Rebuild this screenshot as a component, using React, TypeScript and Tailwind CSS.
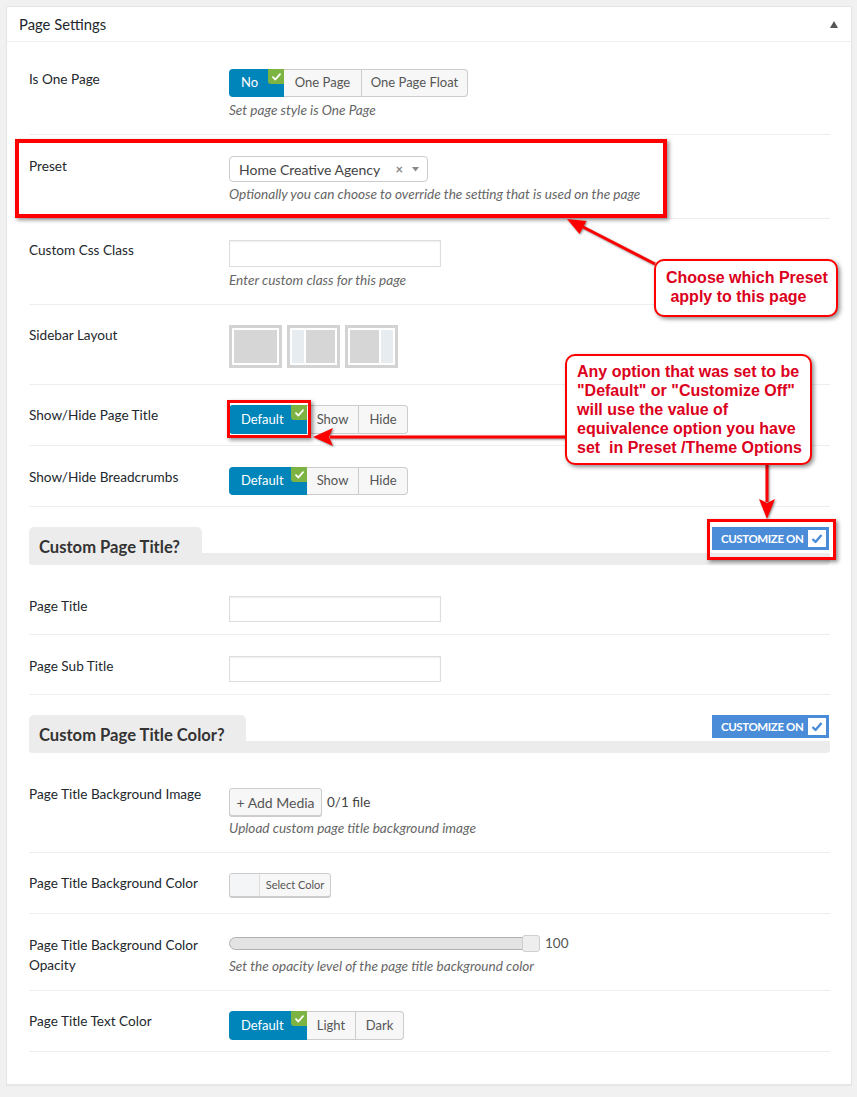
import React from "react";

function Badge() {
  return (
    <div className="absolute top-0 right-0 w-[16px] h-[15px] bg-[#7cb342] rounded-bl-[3px] flex items-center justify-center">
      <svg width="9" height="8" viewBox="0 0 9 8">
        <path d="M1 4.2 L3.4 6.5 L8 1.2" stroke="#fff" strokeWidth="1.8" fill="none" strokeLinecap="round" strokeLinejoin="round" />
      </svg>
    </div>
  );
}

type SegItem = { t: string; w: string };

function Seg({ items, h }: { items: SegItem[]; h: string }) {
  return (
    <div className={`flex ${h} text-[13px]`}>
      {items.map((it, i) =>
        i === 0 ? (
          <div key={i} className={`relative ${it.w} bg-[#0085ba] text-white rounded-l-[4px] flex items-center pl-[12px]`}>
            {it.t}
            <Badge />
          </div>
        ) : (
          <div
            key={i}
            className={`${it.w} bg-[#f7f7f7] text-[#555] border-y border-r border-[#ccc] flex items-center justify-center ${
              i === items.length - 1 ? "rounded-r-[4px]" : ""
            }`}
          >
            {it.t}
          </div>
        )
      )}
    </div>
  );
}

function Row({
  label,
  pt,
  pb,
  children,
}: {
  label: React.ReactNode;
  pt: string;
  pb: string;
  children: React.ReactNode;
}) {
  return (
    <div className={`flex border-b border-[#eee] ${pt} ${pb}`}>
      <div className="w-[200px] shrink-0 text-[13.6px] leading-[20px] text-[#23282d]">{label}</div>
      <div className="flex-1 flex flex-col items-start">{children}</div>
    </div>
  );
}

function Desc({ children, mt }: { children: React.ReactNode; mt: string }) {
  return <div className={`${mt} italic text-[13.6px] leading-[20px] text-[#666]`}>{children}</div>;
}

function Input({ h }: { h: string }) {
  return <div className={`w-[212px] ${h} border border-[#ddd] bg-white shadow-[inset_0_1px_2px_rgba(0,0,0,0.07)]`} />;
}

function CustomizeOn() {
  return (
    <div className="mr-[1px] w-[117px] h-[23px] bg-[#4a8cd8] flex items-center pl-[9px] pr-[3px]">
      <span className="text-white text-[11.5px] font-bold tracking-[-0.4px] leading-none">CUSTOMIZE ON</span>
      <div className="ml-auto w-[18px] h-[17px] bg-white flex items-center justify-center">
        <svg width="12" height="11" viewBox="0 0 12 11">
          <path d="M1.5 6 L4.5 9 L10.5 2" stroke="#4a8cd8" strokeWidth="2.4" fill="none" strokeLinejoin="round" />
        </svg>
      </div>
    </div>
  );
}

function Section({ title, w }: { title: string; w: string }) {
  return (
    <div className="mt-[20px] h-[38px] flex justify-between items-start rounded-b-[4px] overflow-hidden bg-[linear-gradient(to_bottom,transparent_26px,#ececec_26px)]">
      <div className={`${w} h-[38px] bg-[#ececec] rounded-t-[5px] pl-[10px] pt-[10px] text-[16.6px] leading-[20px] font-bold text-[#333] whitespace-nowrap`}>
        {title}
      </div>
      <CustomizeOn />
    </div>
  );
}

function LayoutBox({ kind }: { kind: number }) {
  return (
    <div className="w-[53px] h-[43px] border-[3px] border-[#d3d3d3] bg-white p-[2px] flex gap-[2px]">
      {kind === 0 && <div className="flex-1 bg-[#d6d6d6]" />}
      {kind === 1 && (
        <>
          <div className="w-[12px] bg-[#e6ecf0]" />
          <div className="flex-1 bg-[#d6d6d6]" />
        </>
      )}
      {kind === 2 && (
        <>
          <div className="flex-1 bg-[#d6d6d6]" />
          <div className="w-[12px] bg-[#e6ecf0]" />
        </>
      )}
    </div>
  );
}

export default function App() {
  return (
    <div className="relative w-[857px] min-h-[1097px] bg-[#f1f1f1] pt-[6px] px-[6px] font-['Lato',sans-serif]">
      <div className="w-[846px] bg-white border border-[#e5e5e5] shadow-[0_1px_1px_rgba(0,0,0,0.04)]">
        <div className="h-[35px] border-b border-[#eee] flex items-center justify-between pl-[12px] pr-[13px]">
          <span className="text-[14.8px] text-[#23282d]">Page Settings</span>
          <svg width="8" height="7" viewBox="0 0 8 7">
            <polygon points="4,0 8,7 0,7" fill="#555" />
          </svg>
        </div>
        <div className="pl-[22px] pr-[21px] pb-[32px]">
          <Row label="Is One Page" pt="pt-[27px]" pb="pb-[14px]">
            <Seg
              h="h-[28px]"
              items={[
                { t: "No", w: "w-[55px]" },
                { t: "One Page", w: "w-[78px]" },
                { t: "One Page Float", w: "w-[106px]" },
              ]}
            />
            <Desc mt="mt-[3px]">Set page style is One Page</Desc>
          </Row>
          <Row label="Preset" pt="pt-[21px]" pb="pb-[14px]">
            <div className="w-[199px] h-[26px] border border-[#ccc] rounded-[4px] flex items-center pl-[9px] pr-[8px] text-[14px] text-[#444]">
              <span>Home Creative Agency</span>
              <span className="ml-auto text-[#888] text-[13px] font-bold leading-none">×</span>
              <svg className="ml-[9px]" width="7" height="5" viewBox="0 0 7 5">
                <polygon points="0,0 7,0 3.5,4.5" fill="#888" />
              </svg>
            </div>
            <Desc mt="mt-[2px]">Optionally you can choose to override the setting that is used on the page</Desc>
          </Row>
          <Row label="Custom Css Class" pt="pt-[21px]" pb="pb-[14px]">
            <Input h="h-[27px]" />
            <Desc mt="mt-[3px]">Enter custom class for this page</Desc>
          </Row>
          <Row label="Sidebar Layout" pt="pt-[20px]" pb="pb-[16px]">
            <div className="flex gap-[5px]">
              <LayoutBox kind={0} />
              <LayoutBox kind={1} />
              <LayoutBox kind={2} />
            </div>
          </Row>
          <Row label="Show/Hide Page Title" pt="pt-[20px]" pb="pb-[11px]">
            <Seg
              h="h-[29px]"
              items={[
                { t: "Default", w: "w-[78px]" },
                { t: "Show", w: "w-[52px]" },
                { t: "Hide", w: "w-[49px]" },
              ]}
            />
          </Row>
          <Row label="Show/Hide Breadcrumbs" pt="pt-[21px]" pb="pb-[11px]">
            <Seg
              h="h-[28px]"
              items={[
                { t: "Default", w: "w-[78px]" },
                { t: "Show", w: "w-[52px]" },
                { t: "Hide", w: "w-[49px]" },
              ]}
            />
          </Row>
          <Section title="Custom Page Title?" w="w-[173px]" />
          <Row label="Page Title" pt="pt-[31px]" pb="pb-[12px]">
            <Input h="h-[26px]" />
          </Row>
          <Row label="Page Sub Title" pt="pt-[21px]" pb="pb-[12px]">
            <Input h="h-[26px]" />
          </Row>
          <Section title="Custom Page Title Color?" w="w-[217px]" />
          <Row label="Page Title Background Image" pt="pt-[31px]" pb="pb-[14px]">
            <div className="mt-[4px] flex items-center">
              <div className="w-[93px] h-[28px] border border-[#ccc] rounded-[3px] bg-[#f7f7f7] shadow-[0_1px_0_#ccc] flex items-center justify-center text-[14px] text-[#555]">
                + Add Media
              </div>
              <span className="ml-[5px] text-[13.5px] text-[#444]">0/1 file</span>
            </div>
            <Desc mt="mt-[2px]">Upload custom page title background image</Desc>
          </Row>
          <Row label="Page Title Background Color" pt="pt-[20px]" pb="pb-[16px]">
            <div className="w-[102px] h-[24px] border border-[#ccc] rounded-[3px] bg-[#f7f7f7] shadow-[0_1px_0_#ccc] flex overflow-hidden">
              <div className="w-[30px] bg-[#f3f5f6] border-r border-[#ddd]" />
              <div className="flex-1 flex items-center justify-center text-[11px] text-[#555]">Select Color</div>
            </div>
          </Row>
          <Row
            label={
              <>
                Page Title Background Color
                <br />
                Opacity
              </>
            }
            pt="pt-[21px]"
            pb="pb-[14px]"
          >
            <div className="flex items-center h-[17px]">
              <div className="relative w-[311px] h-[13px] rounded-full bg-[#e3e3e3] border border-[#b0b0b0]">
                <div className="absolute right-[-1px] top-[-3px] w-[18px] h-[17px] rounded-[3px] bg-[#eeeeee] border border-[#cfcfcf]" />
              </div>
              <span className="ml-[5px] text-[13.5px] text-[#555]">100</span>
            </div>
            <Desc mt="mt-[4px]">Set the opacity level of the page title background color</Desc>
          </Row>
          <Row label="Page Title Text Color" pt="pt-[20px]" pb="pb-[11px]">
            <Seg
              h="h-[29px]"
              items={[
                { t: "Default", w: "w-[78px]" },
                { t: "Light", w: "w-[49px]" },
                { t: "Dark", w: "w-[48px]" },
              ]}
            />
          </Row>
        </div>
      </div>

      {/* Annotation overlays */}
      <div className="absolute left-[15px] top-[139px] w-[652px] h-[79px] border-[4px] border-[#ff0000] shadow-[2px_2px_4px_rgba(0,0,0,0.45)] pointer-events-none" />
      <div className="absolute left-[227px] top-[400px] w-[84px] h-[38px] border-[3px] border-[#ff0000] shadow-[2px_2px_4px_rgba(0,0,0,0.45)] pointer-events-none" />
      <div className="absolute left-[707px] top-[519px] w-[129px] h-[41px] border-[3px] border-[#ff0000] shadow-[2px_2px_4px_rgba(0,0,0,0.45)] pointer-events-none" />

      <svg
        className="absolute left-0 top-0 pointer-events-none drop-shadow-[1px_1px_1px_rgba(0,0,0,0.45)]"
        width="857"
        height="1097"
        viewBox="0 0 857 1097"
      >
        <line x1="655" y1="264" x2="583" y2="227" stroke="#f00" strokeWidth="3" />
        <polygon points="567,219 586.5,221 579.5,234" fill="#f00" />
        <line x1="566" y1="437" x2="330" y2="437" stroke="#f00" strokeWidth="3" />
        <polygon points="313,437 333,428 329,437 333,446" fill="#f00" />
        <line x1="767" y1="464" x2="767" y2="502" stroke="#f00" strokeWidth="3" />
        <polygon points="767,519 759,499 767,503 775,499" fill="#f00" />
      </svg>

      <div className="absolute left-[654px] top-[259px] w-[184px] h-[58px] border-2 border-[#ff0000] rounded-[10px] bg-white shadow-[2px_2px_4px_rgba(0,0,0,0.45)] pl-[10px] pt-[7px] font-['Liberation_Sans',Arial,sans-serif] font-bold text-[16px] leading-[19px] text-[#dc0020] whitespace-nowrap">
        Choose which Preset
        <br />
        &nbsp;apply to this page
      </div>
      <div className="absolute left-[565px] top-[354px] w-[247px] h-[111px] border-2 border-[#ff0000] rounded-[10px] bg-white shadow-[2px_2px_4px_rgba(0,0,0,0.45)] pl-[10px] pt-[6px] font-['Liberation_Sans',Arial,sans-serif] font-bold text-[16px] leading-[19px] text-[#dc0020] whitespace-pre">
        {"Any option that was set to be\n\"Default\" or \"Customize Off\"\nwill use the value of\nequivalence option you have\nset  in Preset /Theme Options"}
      </div>
    </div>
  );
}
